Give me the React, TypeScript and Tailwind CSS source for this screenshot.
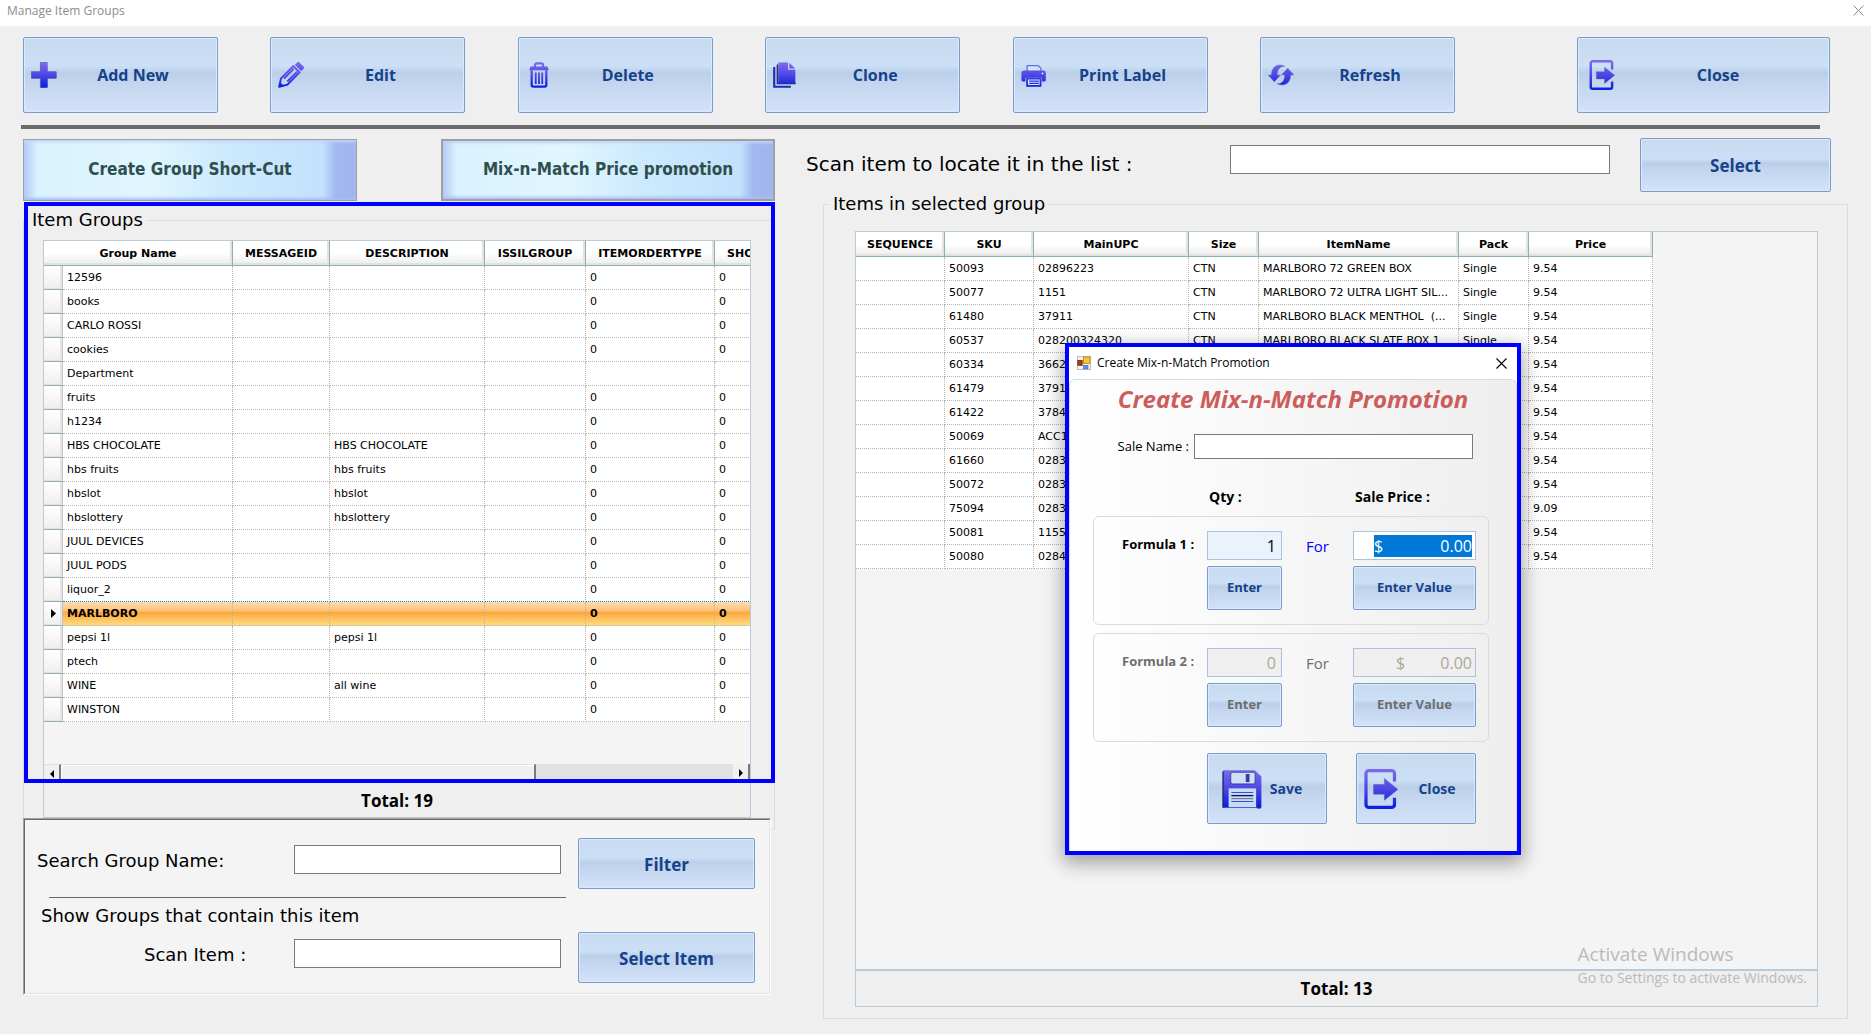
import type { ReactNode } from 'react'
import { clsx } from 'clsx'

const groups = [
  ['12596', '', '', '', '0', '0'],
  ['books', '', '', '', '0', '0'],
  ['CARLO ROSSI', '', '', '', '0', '0'],
  ['cookies', '', '', '', '0', '0'],
  ['Department', '', '', '', '', ''],
  ['fruits', '', '', '', '0', '0'],
  ['h1234', '', '', '', '0', '0'],
  ['HBS CHOCOLATE', '', 'HBS CHOCOLATE', '', '0', '0'],
  ['hbs fruits', '', 'hbs fruits', '', '0', '0'],
  ['hbslot', '', 'hbslot', '', '0', '0'],
  ['hbslottery', '', 'hbslottery', '', '0', '0'],
  ['JUUL DEVICES', '', '', '', '0', '0'],
  ['JUUL PODS', '', '', '', '0', '0'],
  ['liquor_2', '', '', '', '0', '0'],
  ['MARLBORO', '', '', '', '0', '0'],
  ['pepsi 1l', '', 'pepsi 1l', '', '0', '0'],
  ['ptech', '', '', '', '0', '0'],
  ['WINE', '', 'all wine', '', '0', '0'],
  ['WINSTON', '', '', '', '0', '0'],
]

const SELECTED = 14

const items = [
  ['', '50093', '02896223', 'CTN', 'MARLBORO 72 GREEN BOX', 'Single', '9.54'],
  ['', '50077', '1151', 'CTN', 'MARLBORO 72 ULTRA LIGHT SIL...', 'Single', '9.54'],
  ['', '61480', '37911', 'CTN', 'MARLBORO BLACK MENTHOL  (...', 'Single', '9.54'],
  ['', '60537', '028200324320', 'CTN', 'MARLBORO BLACK SLATE BOX 1', 'Single', '9.54'],
  ['', '60334', '3662', '', '', '', '9.54'],
  ['', '61479', '3791', '', '', '', '9.54'],
  ['', '61422', '3784', '', '', '', '9.54'],
  ['', '50069', 'ACC1', '', '', '', '9.54'],
  ['', '61660', '0283', '', '', '', '9.54'],
  ['', '50072', '0283', '', '', '', '9.54'],
  ['', '75094', '0283', '', '', '', '9.09'],
  ['', '50081', '1155', '', '', '', '9.54'],
  ['', '50080', '0284', '', '', '', '9.54'],
]

const segoe = "font-['Open_Sans','Noto_Sans',sans-serif]"
const verdana = "font-['DejaVu_Sans',sans-serif]"

const headCell =
  'h-[25px] border-r border-b border-[#8fb0ad] bg-gradient-to-b from-white from-50% to-[#ececec] p-0 pt-0.5 text-center font-bold shadow-[inset_-2px_-2px_0_#e2e2e2]'
const bodyCell = 'h-6 overflow-hidden border-r border-b border-dotted border-[#b4b4b4] p-0 pl-1 whitespace-pre'
const textBox = 'h-[29px] border border-[#7a7a7a] bg-white px-1 text-base outline-none'

/* ---------- icons, all drawn on a 32 grid so they share one gradient ---------- */

function Ink() {
  return (
    <svg className="absolute h-0 w-0" aria-hidden="true">
      <defs>
        <linearGradient id="ink" gradientUnits="userSpaceOnUse" x1="0" y1="2" x2="0" y2="30">
          <stop offset="0" stopColor="#7a68ee" />
          <stop offset="0.5" stopColor="#4c46e4" />
          <stop offset="1" stopColor="#0d22e0" />
        </linearGradient>
      </defs>
    </svg>
  )
}

function Icon({ className, children }: { className: string; children: ReactNode }) {
  return (
    <svg viewBox="0 0 32 32" className={clsx('shrink-0', className)} fill="none" aria-hidden="true">
      {children}
    </svg>
  )
}

const PlusIcon = () => (
  <Icon className="size-[26px]">
    <path d="M11 0h9v11.500h11v9H20V32h-9V20.500H0v-9h11z" fill="#2b2f7a" opacity=".6" />
    <path d="M12 .5h8.500V12H31.500v8H20.500v11.500H12V20H.8v-8H12z" fill="url(#ink)" />
  </Icon>
)

const PencilIcon = () => (
  <Icon className="size-[26px]">
    <path d="M1.500 30.500l2.200-10.300L19 5l7.600 7.600L11.600 27.800z" stroke="url(#ink)" strokeWidth="2.400" strokeLinejoin="round" />
    <path d="M20.500 3.600L23.600.6a2 2 0 0 1 2.800 0l5 5a2 2 0 0 1 0 2.800l-3 3z" fill="url(#ink)" />
    <path d="M20.200 3.800l8 8" stroke="#d5e2f6" strokeWidth="1" />
    <path d="M7.300 20.500L19.500 8.300M11.500 23.800L23.500 12" stroke="url(#ink)" strokeWidth="2.200" />
    <path d="M1 31l1.500-6.500 5 5z" fill="url(#ink)" />
  </Icon>
)

const TrashIcon = () => (
  <Icon className="size-[26px]">
    <path d="M11 6V3.800a2 2 0 0 1 2-2h6a2 2 0 0 1 2 2V6" stroke="url(#ink)" strokeWidth="2.800" />
    <path d="M5.500 5.500h21l1.500 4.500h-24z" fill="url(#ink)" />
    <path d="M7 10v18.300a2 2 0 0 0 2 2h14a2 2 0 0 0 2-2V10" stroke="url(#ink)" strokeWidth="2.800" />
    <path d="M12 13v14M16 13v14M20 13v14" stroke="url(#ink)" strokeWidth="2.200" />
  </Icon>
)

const CloneIcon = () => (
  <Icon className="size-[26px]">
    <path d="M1.500 6v24.500H22" stroke="#1b2ab8" strokeWidth="2.600" />
    <path d="M5.500 3v23.500H28" stroke="#27306e" strokeWidth="2" />
    <path d="M6.500 .5h12v9h9v16.500h-21z" fill="url(#ink)" />
    <path d="M20 .8v7.200h7.500z" fill="url(#ink)" />
  </Icon>
)

const PrinterIcon = () => (
  <Icon className="size-[26px]">
    <path d="M7.500 12V4.500h13.500l3.500 3V12" stroke="#6b6fd8" strokeWidth="1.600" fill="#d3e2f8" />
    <path d="M4 10.500h23a3.500 3.500 0 0 1 3.500 3.500v8a2 2 0 0 1-2 2h-3v-4.500h-20V24h-3a2 2 0 0 1-2-2v-8A3.500 3.500 0 0 1 4 10.500z" fill="url(#ink)" />
    <path d="M7.500 20.500h16.500v8.800H7.500z" fill="#dbe7fa" stroke="url(#ink)" strokeWidth="2.200" />
    <path d="M10 23.500h12M10 26.300h12" stroke="url(#ink)" strokeWidth="1.600" />
    <circle cx="26.500" cy="14" r="1.200" fill="#dbe7fa" />
  </Icon>
)

const RefreshIcon = () => (
  <Icon className="size-[26px]">
    <path d="M21 5.500C15 5 11.500 9 11.500 16h4L7.800 24.500 0 16h4C4 6 12 .5 21 5.500z" fill="url(#ink)" stroke="#7d86b8" strokeWidth=".6" />
    <path d="M11 26.500C17 27 20.500 23 20.500 16h-4l7.700-8.500L32 16h-4c0 10-8 15.500-17 10.500z" fill="url(#ink)" stroke="#7d86b8" strokeWidth=".6" />
  </Icon>
)

const ExitIcon = ({ className }: { className: string }) => (
  <svg viewBox="0 0 27 32" className={clsx('shrink-0', className)} fill="none" aria-hidden="true">
    <path d="M24.300 10V3.500a2.200 2.200 0 0 0-2.200-2.200H3.700A2.200 2.200 0 0 0 1.500 3.500v25a2.200 2.200 0 0 0 2.200 2.200h18.400a2.200 2.200 0 0 0 2.200-2.200V23" stroke="url(#ink)" strokeWidth="2.600" />
    <path d="M7.500 12.400h8.700V7.600L27 16.300 16.200 25v-4.800H7.500z" fill="url(#ink)" stroke="#5a63b8" strokeWidth=".4" />
  </svg>
)

const SaveIcon = () => (
  <Icon className="size-10">
    <path d="M.8 1h25.500l5.200 5v25H.8z" fill="url(#ink)" />
    <path d="M.8 31V2M28 31h3" stroke="#1a1f66" strokeWidth="1" />
    <rect x="7" y="2.600" width="19.500" height="9.300" rx="1.500" fill="#cfdff6" stroke="#2a2f80" strokeWidth=".6" />
    <rect x="19" y="4" width="3" height="6.500" fill="#3d3aa8" />
    <rect x="5.300" y="15.500" width="22" height="15" fill="#c9daf4" />
    <path d="M7.500 18.800h17.500M7.500 26h17.500" stroke="#3a4be0" strokeWidth=".9" />
    <path d="M7.500 21.300h17.500" stroke="#10165c" strokeWidth="1.100" />
    <path d="M7.500 23.700h17.500" stroke="#6b7390" strokeWidth=".9" />
  </Icon>
)

/* ---------- building blocks ---------- */

interface OfficeButtonProps {
  children: ReactNode
  className?: string
  disabled?: boolean
}

function OfficeButton({ children, className, disabled }: OfficeButtonProps) {
  return (
    <button
      type="button"
      disabled={disabled}
      className={clsx(
        segoe,
        'flex shrink-0 items-center justify-center rounded-[2px] border border-[#7a9bcd] font-bold shadow-[inset_0_0_0_1px_#dbe9fb]',
        'bg-[linear-gradient(to_bottom,#c8daee_0%,#cbdff6_38%,#bacfe8_47%,#c3d4ee_58%,#d1e2f9_100%)]',
        disabled ? 'text-[#6d6d6d]' : 'text-[#15428b]',
        className,
      )}
    >
      {children}
    </button>
  )
}

function ToolButton({ icon, label }: { icon: ReactNode; label: string }) {
  return (
    <OfficeButton className="h-[76px] w-[195px] pr-2 pl-[7px] text-base">
      {icon}
      <span className="flex-1">{label}</span>
    </OfficeButton>
  )
}

function GlassButton({ label, className }: { label: string; className: string }) {
  return (
    <button
      type="button"
      className={clsx(
        "h-[62px] w-[334px] border-[#a0a0a0] text-[17px] font-bold text-[#2f4f4f] font-['DejaVu_Sans_Condensed','Noto_Sans',sans-serif]",
        'bg-[linear-gradient(to_right,#b4c9f5_0%,#d9f2ff_4%,#e0f6ff_38%,#cdeafd_60%,#c3e1fb_90%,#a3b7f0_94%,#a0b5f0_100%)]',
        'shadow-[inset_0_3px_3px_-1px_#c0d4f6,inset_0_-3px_3px_-1px_#a9bff2]',
        className,
      )}
    >
      {label}
    </button>
  )
}

function Toolbar() {
  return (
    <header className="flex items-start justify-between pt-[11px] pr-[41px] pl-[23px]">
      <div className="flex w-[1432px] justify-between">
        <ToolButton icon={<PlusIcon />} label="Add New" />
        <ToolButton icon={<PencilIcon />} label="Edit" />
        <ToolButton icon={<TrashIcon />} label="Delete" />
        <ToolButton icon={<CloneIcon />} label="Clone" />
        <ToolButton icon={<PrinterIcon />} label="Print Label" />
        <ToolButton icon={<RefreshIcon />} label="Refresh" />
      </div>
      <OfficeButton className="h-[76px] w-[253px] pr-2 pl-[11px] text-base">
        <ExitIcon className="h-[30px] w-[26px]" />
        <span className="flex-1">Close</span>
      </OfficeButton>
    </header>
  )
}

function GroupTable() {
  return (
    <table className={clsx(verdana, 'w-[785px] table-fixed border-separate border-spacing-0 bg-white text-[11px] leading-4 text-black')}>
      <colgroup>
        <col className="w-[19px]" />
        <col className="w-[170px]" />
        <col className="w-[97px]" />
        <col className="w-[155px]" />
        <col className="w-[101px]" />
        <col className="w-[129px]" />
        <col className="w-[114px]" />
      </colgroup>
      <thead>
        <tr>
          <th colSpan={2} className={headCell}>Group Name</th>
          <th className={headCell}>MESSAGEID</th>
          <th className={headCell}>DESCRIPTION</th>
          <th className={headCell}>ISSILGROUP</th>
          <th className={headCell}>ITEMORDERTYPE</th>
          <th className={clsx(headCell, 'pl-3 text-left!')}>SHO</th>
        </tr>
      </thead>
      <tbody>
        {groups.map((row, i) => (
          <tr
            key={row[0]}
            className={clsx(i === SELECTED && 'bg-[linear-gradient(to_bottom,#fddcae_0%,#fdbf78_38%,#fca63c_42%,#fee082_100%)] font-bold')}
          >
            <td className="h-6 border-r border-b border-[#8fb0ad] border-r-[#c4c4c4] bg-gradient-to-b from-white to-[#efefef] p-0 shadow-[inset_-2px_-1px_0_#e4e4e4]">
              {i === SELECTED && (
                <svg viewBox="0 0 5 9" className="ml-[7px] h-[9px] w-[5px]" aria-hidden="true">
                  <path d="M0 0l5 4.500L0 9z" fill="#000" />
                </svg>
              )}
            </td>
            {row.map((cell, c) => (
              <td key={c} className={clsx(bodyCell, i === SELECTED - 1 && 'border-b-[#1f6fc0]')}>
                {cell}
              </td>
            ))}
          </tr>
        ))}
      </tbody>
    </table>
  )
}

function ScrollBar() {
  return (
    <div className="flex h-[18px] bg-[#e1e1e1]">
      <div className="flex w-[17px] items-center justify-center border-t border-r-2 border-t-[#e1e1e1] border-r-[#7a7a7a] bg-[#f0f0f0]">
        <svg viewBox="0 0 4 8" className="h-2 w-1" aria-hidden="true">
          <path d="M4 0L0 4l4 4z" fill="#000" />
        </svg>
      </div>
      <div className="w-[475px] border-t border-r-2 border-t-[#e1e1e1] border-r-[#7a7a7a] bg-[#f0f0f0] shadow-[inset_1px_1px_0_#fff]" />
      <div className="ml-auto flex w-[17px] items-center justify-center border-r-2 border-[#7a7a7a] bg-[#f0f0f0]">
        <svg viewBox="0 0 4 8" className="h-2 w-1" aria-hidden="true">
          <path d="M0 0l4 4-4 4z" fill="#000" />
        </svg>
      </div>
    </div>
  )
}

function ItemGroups() {
  return (
    <div className="relative mt-[7px]">
      <fieldset className="min-w-0 border border-[#dcdcdc] pr-[23px] pb-[11px] pl-[19px]">
        <legend className={clsx(verdana, '-ml-[15px] px-1 text-lg leading-6')}>Item Groups</legend>
        <div className="mt-2 overflow-hidden border border-[#b8cbdb]">
          <div className="overflow-hidden bg-[#f4f4f4] pb-[42px]">
            <GroupTable />
          </div>
          <ScrollBar />
          <p className={clsx(segoe, 'h-[35px] text-center text-[17px] leading-[37px] font-bold')}>Total: 19</p>
        </div>
      </fieldset>
      {/* highlight frame */}
      <div className="pointer-events-none absolute inset-x-0 -top-1.5 bottom-[47px] ml-px border-4 border-[#0000ff]" />
    </div>
  )
}

function SearchPanel() {
  const label = 'w-[257px] pt-1 text-lg leading-6'
  return (
    <section className="relative -mt-3 mr-1 border border-t-[#a0a0a0] border-r-white border-b-white border-l-[#a0a0a0]">
      <div className={clsx(verdana, 'border border-t-[#696969] border-r-[#e3e3e3] border-b-[#e3e3e3] border-l-[#696969] bg-[#f4f4f4] pt-[18px] pr-[14px] pb-[10px] pl-3')}>
        <div className="flex items-center justify-between">
          <div className="flex pb-2">
            <label htmlFor="group-name" className={label}>Search Group Name:</label>
            <input id="group-name" type="text" className={clsx(textBox, 'w-[267px]')} />
          </div>
          <OfficeButton className="h-[51px] w-[177px] pt-0.5 text-[17px]">Filter</OfficeButton>
        </div>
        <hr className="mt-2 ml-3 w-[517px] border-[#696969]" />
        <h2 className="mt-1.5 ml-1 text-lg leading-6">Show Groups that contain this item</h2>
        <div className="mt-1 flex items-center justify-between">
          <div className="flex pb-2">
            <label htmlFor="scan-item" className={clsx(label, 'pl-[107px]')}>Scan Item :</label>
            <input id="scan-item" type="text" className={clsx(textBox, 'w-[267px]')} />
          </div>
          <OfficeButton className="h-[51px] w-[177px] pt-0.5 text-[17px]">Select Item</OfficeButton>
        </div>
      </div>
    </section>
  )
}

function ItemsInGroup() {
  return (
    <fieldset className="mr-[23px] ml-12 flex min-w-0 flex-1 flex-col border border-[#dcdcdc] px-[31px] pb-[11px]">
      <legend className={clsx(verdana, '-ml-[26px] px-1 text-lg leading-6')}>Items in selected group</legend>
      <div className="mt-[15px] mr-[-2px] flex flex-1 flex-col border border-[#b8cbdb]">
        <div className="flex-1 bg-[#f4f4f4]">
          <table className={clsx(verdana, 'w-[797px] table-fixed border-separate border-spacing-0 bg-white text-[11px] leading-4 text-black')}>
            <colgroup>
              <col className="w-[89px]" />
              <col className="w-[89px]" />
              <col className="w-[155px]" />
              <col className="w-[70px]" />
              <col className="w-[200px]" />
              <col className="w-[70px]" />
              <col className="w-[124px]" />
            </colgroup>
            <thead>
              <tr>
                {['SEQUENCE', 'SKU', 'MainUPC', 'Size', 'ItemName', 'Pack', 'Price'].map((h) => (
                  <th key={h} className={headCell}>{h}</th>
                ))}
              </tr>
            </thead>
            <tbody>
              {items.map((row) => (
                <tr key={row[1]}>
                  {row.map((cell, c) => (
                    <td key={c} className={bodyCell}>{cell}</td>
                  ))}
                </tr>
              ))}
            </tbody>
          </table>
        </div>
        <p className={clsx(segoe, 'border-t-2 border-[#b8cbdb] text-center text-[17px] leading-[35px] font-bold')}>Total: 13</p>
      </div>
    </fieldset>
  )
}

interface FormulaProps {
  id: string
  title: string
  qty: string
  disabled?: boolean
}

function Formula({ id, title, qty, disabled }: FormulaProps) {
  return (
    <div className="grid grid-cols-[113px_75px_71px_123px] gap-y-[5px] rounded-md border border-[#d3dde6] py-[14px]">
      <label htmlFor={`${id}-qty`} className={clsx('pl-7 text-[13px] leading-[26px] font-bold', disabled && 'text-[#6d6d6d]')}>
        {title}
      </label>
      <input
        id={`${id}-qty`}
        type="text"
        defaultValue={qty}
        disabled={disabled}
        className={clsx('h-[29px] w-full border border-[#abc1de] pr-[5px] text-right text-base', disabled ? 'bg-[#efefef] text-[#aca899]' : 'bg-[#eaf2fb]')}
      />
      <label htmlFor={`${id}-price`} className={clsx('pl-6 text-[15px] leading-[30px]', disabled ? 'text-[#6d6d6d]' : 'text-[#0000ff]')}>
        For
      </label>
      <div className={clsx('flex h-[29px] items-center justify-end border border-[#abc1de] pr-[3px]', disabled ? 'bg-[#efefef] text-[#aca899]' : 'bg-white text-white')}>
        <div className={clsx('flex h-[22px] items-center text-base', disabled ? 'w-[76px]' : 'w-[98px] bg-[#0078d7]')}>
          <span>$</span>
          <input id={`${id}-price`} type="text" defaultValue="0.00" disabled={disabled} className="w-full min-w-0 bg-transparent text-right outline-none" />
        </div>
      </div>
      <OfficeButton disabled={disabled} className="col-start-2 h-11 text-[13px]">Enter</OfficeButton>
      <OfficeButton disabled={disabled} className="col-start-4 h-11 text-[13px]">Enter Value</OfficeButton>
    </div>
  )
}

function PromotionDialog() {
  return (
    <div
      role="dialog"
      aria-labelledby="promo-title"
      className={clsx(segoe, 'absolute top-[343px] left-[1065px] w-[456px] border-4 border-[#0000ff] bg-white text-black shadow-[0_6px_18px_2px_rgba(0,0,0,0.35)]')}
    >
      <div className="flex h-8 items-center pr-2.5 pl-2">
        <svg viewBox="0 0 14 14" className="size-[14px]" aria-hidden="true">
          <rect x=".5" y=".5" width="13" height="13" fill="#f4f4f4" stroke="#bdbdbd" />
          <rect x="6.500" y="1" width="6.500" height="6.500" fill="#fbc53a" stroke="#b8860b" strokeWidth=".8" />
          <rect x=".8" y="4.500" width="4.400" height="4.800" fill="#b3391c" stroke="#7a1e0c" strokeWidth=".8" />
          <rect x="6.500" y="9.300" width="4.500" height="3.500" fill="#5a94e6" stroke="#2f68bd" strokeWidth=".6" />
        </svg>
        <span className="ml-1.5 flex-1 text-xs">Create Mix-n-Match Promotion</span>
        <button type="button" aria-label="Close dialog">
          <svg viewBox="0 0 11 11" className="size-[11px]" aria-hidden="true">
            <path d="M.5.5l10 10M10.500.5l-10 10" stroke="#000" strokeWidth="1.100" />
          </svg>
        </button>
      </div>
      <div className="rounded-t-md border border-b-0 border-[#d3dde6] bg-gradient-to-r from-white to-[#eeeeee] pb-[27px]">
        <h1 id="promo-title" className="text-center text-2xl leading-[38px] font-bold text-[#cd5c5c] italic">
          Create Mix-n-Match Promotion
        </h1>
        <div className="mt-4 flex items-center justify-end gap-[5px] pr-[43px]">
          <label htmlFor="sale-name" className="text-[13px]">Sale Name :</label>
          <input id="sale-name" type="text" className="h-[25px] w-[279px] border border-[#7a7a7a] bg-white px-1 text-sm outline-none" />
        </div>
        <div className="mt-[26px] mr-[27px] ml-[23px]">
          <div className="grid grid-cols-[113px_146px_123px] pl-[3px] text-[14px] leading-6 font-bold">
            <span className="col-start-2">Qty :</span>
            <span>Sale Price :</span>
          </div>
          <div className="mt-[7px] flex flex-col gap-2">
            <Formula id="formula-1" title="Formula 1 :" qty="1" />
            <Formula id="formula-2" title="Formula 2 :" qty="0" disabled />
          </div>
        </div>
        <div className="mt-[11px] mr-10 flex justify-end gap-[29px]">
          <OfficeButton className="h-[71px] w-[120px] pr-[18px] pl-2 text-sm">
            <SaveIcon />
            <span className="pl-2">Save</span>
          </OfficeButton>
          <OfficeButton className="h-[71px] w-[120px] pr-3 text-sm">
            <ExitIcon className="h-10 w-[34px]" />
            <span className="pl-5">Close</span>
          </OfficeButton>
        </div>
      </div>
    </div>
  )
}

export default function App() {
  return (
    <div className="relative flex min-h-screen flex-col bg-[#efefef] text-black">
      <Ink />
      <div className={clsx(segoe, 'flex h-[26px] items-start justify-between bg-white pt-[3px] pr-[7px] pl-[7px] text-xs text-[#8c8c8c]')}>
        <span>Manage Item Groups</span>
        <button type="button" aria-label="Close window" className="pt-0.5">
          <svg viewBox="0 0 11 11" className="size-[11px]" aria-hidden="true">
            <path d="M.5.5l10 10M10.500.5l-10 10" stroke="#888" strokeWidth="1" />
          </svg>
        </button>
      </div>
      <Toolbar />
      <div className="mt-3 mr-[51px] ml-[21px] h-1 bg-[#6a6a6a]" />

      <main className="flex flex-1 pb-[15px]">
        <div className="ml-[23px] w-[752px] shrink-0 pt-2.5">
          <div className="flex justify-between">
            <GlassButton label="Create Group Short-Cut" className="border" />
            <GlassButton label="Mix-n-Match Price promotion" className="border-2" />
          </div>
          <ItemGroups />
          <SearchPanel />
        </div>

        <div className="flex min-w-0 flex-1 flex-col pt-[9px]">
          <div className="mr-10 ml-[31px] flex items-center">
            <label htmlFor="locate" className={clsx(verdana, 'w-[424px] pb-0.5 text-xl leading-6')}>
              Scan item to locate it in the list :
            </label>
            <div className="flex flex-1 pb-3">
              <input id="locate" type="text" className={clsx(textBox, 'w-full')} />
            </div>
            <OfficeButton className="ml-[30px] h-[54px] w-[191px] pt-0.5 text-[17px]">Select</OfficeButton>
          </div>
          <ItemsInGroup />
        </div>
      </main>

      <PromotionDialog />

      <div className={clsx(segoe, 'pointer-events-none absolute right-16 bottom-[46px] text-[#bababa]')}>
        <p className="text-[19px] leading-7">Activate Windows</p>
        <p className="text-sm leading-5">Go to Settings to activate Windows.</p>
      </div>
    </div>
  )
}
